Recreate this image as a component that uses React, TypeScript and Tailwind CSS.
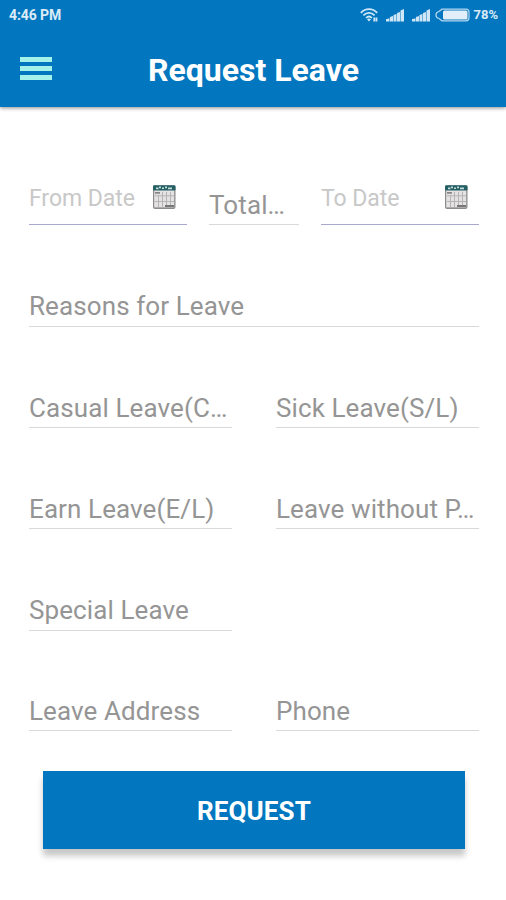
import React from 'react';

interface FieldProps {
  label: string;
  className?: string;
}

function Field({ label, className = 'w-[203px] pb-[3px]' }: FieldProps) {
  return (
    <div className={`border-b border-[#d9d9d9] ${className}`}>
      <span className="block whitespace-nowrap text-[26px] leading-[32px] tracking-[0.1px] text-[#959595]">{label}</span>
    </div>
  );
}

function DateField({ label }: { label: string }) {
  return (
    <div className="flex w-[158px] items-start justify-between border-b border-[#a9a9cf] pb-[11px] pr-[10px]">
      <span className="whitespace-nowrap pt-px text-[23px] leading-[28px] tracking-[-0.05px] text-[#c8c8c8]">{label}</span>
      <CalendarIcon />
    </div>
  );
}

function CalendarIcon() {
  return (
    <svg width="25" height="26" viewBox="0 0 25 26">
      <rect x="1" y="1.5" width="22.5" height="23.5" rx="2" fill="#8b8b8b" />
      <rect x="2.2" y="6" width="20" height="17.4" fill="#e4e2e2" />
      <rect x="1" y="1.2" width="22.5" height="5.2" rx="1.2" fill="#245f64" />
      <path d="M4 4.4h2.5M7 3.4h2M10 4.3h2M13 3.4h2M16 4.4h4" stroke="#c4dcdc" strokeWidth="1.6" />
      <path d="M3 8.9h5" stroke="#666" strokeWidth="1.3" />
      <path d="M3 11.8h19M3 17.5h19M6.5 11v12M10.5 8v15M14.5 8v15M18.5 8v15" stroke="#b4b4b4" strokeWidth="1" />
      <path d="M13 22h9" stroke="#777" strokeWidth="2" />
    </svg>
  );
}

function WifiIcon() {
  return (
    <svg width="20" height="14" viewBox="0 0 20 14" fill="none" stroke="#cfe6f7" strokeWidth="1.7">
      <path d="M.8 4.8C5.5 -.2 12.5 -.2 17.2 4.8" />
      <path d="M3.4 7.4c3.3-3.3 7.9-3.3 11.2 0" />
      <path d="M6 10c1.9-1.9 4.1-1.9 6 0" />
      <path d="M7 11.2l2 2.2 2-2.2q-2-1.500-4 0z" fill="#cfe6f7" stroke="none" />
      <path d="M14.300 9.500v4M16.500 9.500v4" strokeWidth="1.800" />
    </svg>
  );
}

function SignalIcon() {
  return (
    <svg width="19" height="14" viewBox="0 0 19 14" fill="#cfe6f7">
      <path d="M0 13.500v-2.200l3.500-1v3.200zM4 13.500V9l3-1v5.500zM7.500 13.500V7l3-1v7.500zM11 13.500V5l3-1v9.500zM14.500 13.500V2.500L18 1v12.500z" />
    </svg>
  );
}

function BatteryIcon() {
  return (
    <svg width="35" height="14" viewBox="0 0 35 14">
      <path d="M7 1.200h24q3 0 3 3v5.600q0 3-3 3H7L4 10.500Q1 10 1 7t3-3.500z" fill="none" stroke="#b5d8f0" strokeWidth="1.200" />
      <rect x="8" y="2.500" width="24.500" height="9" rx="1.500" fill="#e3eff8" />
    </svg>
  );
}

function StatusBar() {
  return (
    <div className="flex h-[30px] items-center justify-between pl-[9px] pr-[8px] text-[#dbebf7]">
      <span className="text-[14px] font-bold leading-[30px] tracking-[-0.1px]">4:46 PM</span>
      <div className="flex items-center">
        <WifiIcon />
        <div className="ml-[6px] flex gap-[7px]">
          <SignalIcon />
          <SignalIcon />
        </div>
        <div className="ml-[4px]">
          <BatteryIcon />
        </div>
        <span className="ml-[3px] text-[13px] font-bold leading-[30px]">78%</span>
      </div>
    </div>
  );
}

export default function App() {
  return (
    <div className="h-[900px] w-[506px] overflow-hidden bg-white font-['Roboto',sans-serif]">
      <header className="h-[107px] bg-[#0277bf] shadow-[0_1px_4px_rgba(0,0,0,0.45)]">
        <StatusBar />
        <div className="flex items-center pl-[20px]">
          <button className="mb-[4px] flex w-[32px] flex-col gap-[4px]" aria-label="Menu">
            <span className="h-[5px] w-full bg-[#a5f2ea]" />
            <span className="h-[5px] w-full bg-[#a5f2ea]" />
            <span className="h-[5px] w-full bg-[#a5f2ea]" />
          </button>
          <h1 className="ml-[96px] whitespace-nowrap text-[32px] font-bold leading-[80px] text-white">Request Leave</h1>
        </div>
      </header>

      <main className="pl-[29px] pr-[27px]">
        <div className="flex h-[118px] items-end justify-between">
          <DateField label="From Date" />
          <Field label="Total…" className="w-[90px] pb-[3px]" />
          <DateField label="To Date" />
        </div>
        <div className="flex h-[102px] items-end">
          <Field label="Reasons for Leave" className="w-full pb-[4px]" />
        </div>
        <div className="flex h-[101px] items-end justify-between">
          <Field label="Casual Leave(C…" />
          <Field label="Sick Leave(S/L)" />
        </div>
        <div className="flex h-[101px] items-end justify-between">
          <Field label="Earn Leave(E/L)" />
          <Field label="Leave without P…" />
        </div>
        <div className="flex h-[102px] items-end">
          <Field label="Special Leave" className="w-[203px] pb-[4px]" />
        </div>
        <div className="flex h-[100px] items-end justify-between">
          <Field label="Leave Address" />
          <Field label="Phone" />
        </div>
        <button className="ml-[14px] mt-[40px] block h-[78px] w-[422px] bg-[#0277bf] text-[26px] font-bold leading-[80px] tracking-[0.1px] text-white shadow-[0_7px_6px_rgba(0,0,0,0.22)]">
          REQUEST
        </button>
      </main>
    </div>
  );
}
